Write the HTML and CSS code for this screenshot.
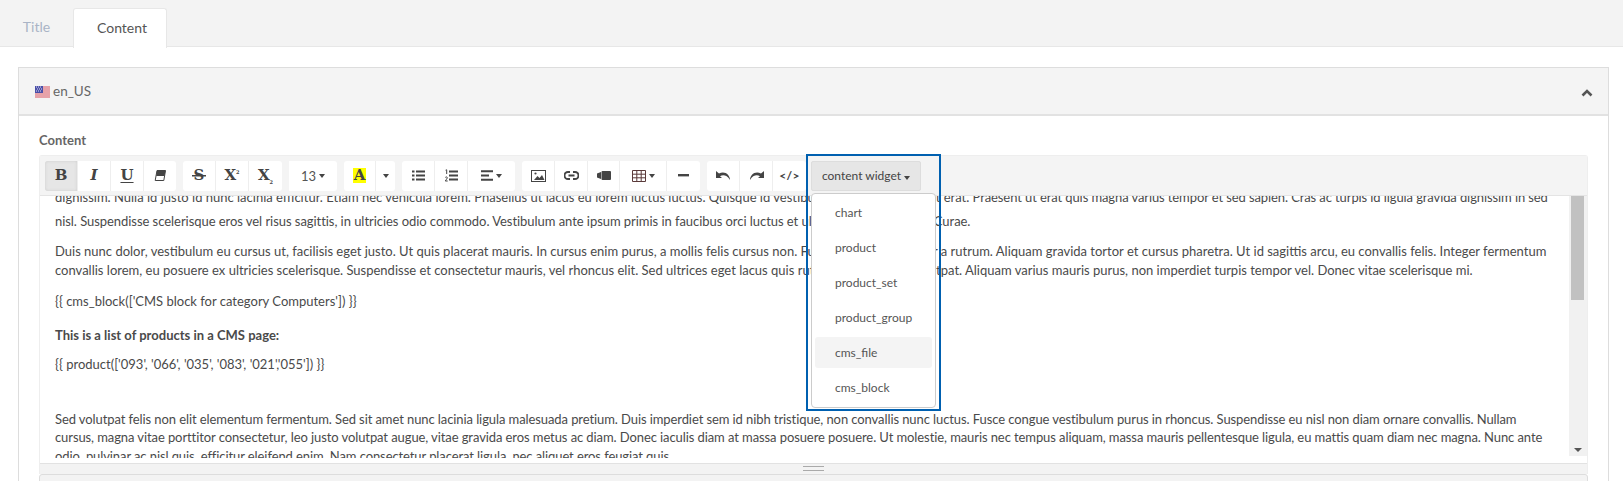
FILE: index.html
```html
<!DOCTYPE html>
<html>
<head>
    <meta charset="utf-8">
    <title>Content</title>
    <link rel="stylesheet" href="styles.css">
</head>
<body>
<ul class="tabs">
    <li class="tab">Title</li>
    <li class="tab tab-active">Content</li>
</ul>

<div class="panel">
    <div class="panel-heading">
        <span class="locale">
            <svg class="flag" width="15" height="12" viewBox="0 0 15 12">
                <rect width="15" height="12" fill="#f4f4f8"/>
                <path d="M0 1h15M0 3h15M0 5h15M0 7h15M0 9h15M0 11h15" stroke="#d8505a" stroke-width="1"/>
                <rect width="8" height="7" fill="#4a4fa8"/>
                <path d="M1 1h1M3 1h1M5 1h1M2 3h1M4 3h1M6 3h1M1 5h1M3 5h1M5 5h1" stroke="#dfe0f2" stroke-width="1"/>
            </svg>
            en_US
        </span>
        <svg class="chevron" width="12" height="8" viewBox="0 0 12 8">
            <path d="M1.5 6.5 6 2l4.500 4.500" fill="none" stroke="#555" stroke-width="2.600"/>
        </svg>
    </div>

    <div class="panel-body">
        <label class="field-label">Content</label>

        <div class="editor">
            <div class="toolbar">
                <div class="btn-group">
                    <button class="btn btn-active"><span class="glyph">B</span></button>
                    <button class="btn"><span class="glyph glyph-italic">I</span></button>
                    <button class="btn"><span class="glyph glyph-under">U</span></button>
                    <button class="btn btn-eraser">
                        <svg width="12" height="11" viewBox="0 0 12 11">
                            <path d="M3 .5H11.500L9.800 10.500H1.200Z" fill="#fff" stroke="#444"/>
                            <path d="M3 .5H11.500L10.600 6H2.200Z" fill="#444"/>
                        </svg>
                    </button>
                </div>
                <div class="btn-group">
                    <button class="btn"><span class="glyph glyph-strike">S</span></button>
                    <button class="btn"><span class="glyph">X<sup class="glyph-mark">2</sup></span></button>
                    <button class="btn"><span class="glyph">X<sub class="glyph-mark">2</sub></span></button>
                </div>
                <div class="btn-group">
                    <button class="btn btn-size">13 <i class="caret"></i></button>
                </div>
                <div class="btn-group">
                    <button class="btn btn-color"><span class="glyph glyph-hilite">A</span></button>
                    <button class="btn btn-narrow"><i class="caret"></i></button>
                </div>
                <div class="btn-group">
                    <button class="btn">
                        <svg width="13" height="11" viewBox="0 0 13 11">
                            <path d="M0 1.500h2.500M4 1.500h9M0 5.500h2.500M4 5.500h9M0 9.500h2.500M4 9.500h9" stroke="#444" stroke-width="2.200"/>
                        </svg>
                    </button>
                    <button class="btn">
                        <svg width="13" height="13" viewBox="0 0 13 13">
                            <path d="M4 2.500h9M4 6.500h9M4 10.500h9" stroke="#444" stroke-width="2.200"/>
                            <path d="M.6 1.200 1.700.8V5M.3 8.500C1 7.500 2.500 7.800 2.300 9 2.100 10 .8 10.800.3 12H2.700" fill="none" stroke="#444"/>
                        </svg>
                    </button>
                    <button class="btn btn-wide">
                        <svg width="12" height="11" viewBox="0 0 12 11">
                            <path d="M0 1.200h12M0 5.500h8M0 9.800h12" stroke="#444" stroke-width="1.900"/>
                        </svg>
                        <i class="caret"></i>
                    </button>
                </div>
                <div class="btn-group">
                    <button class="btn">
                        <svg width="15" height="12" viewBox="0 0 15 12">
                            <rect x=".5" y=".5" width="14" height="11" fill="none" stroke="#444"/>
                            <path d="M3 10 6.500 6l2 2 2.500-3 2.500 5Z" fill="#444"/>
                            <circle cx="4.500" cy="3.500" r="1.100" fill="#444"/>
                        </svg>
                    </button>
                    <button class="btn">
                        <svg width="15" height="9" viewBox="0 0 15 9">
                            <path d="M6 1H4a3.300 3.300 0 0 0 0 7H6M9 1h2a3.300 3.300 0 0 1 0 7H9M4.500 4.500h6" fill="none" stroke="#444" stroke-width="1.900"/>
                        </svg>
                    </button>
                    <button class="btn btn-video">
                        <svg width="14" height="9" viewBox="0 0 14 9">
                            <rect x="4.500" y="0" width="9.500" height="9" rx="1" fill="#444"/>
                            <path d="M0 2.500 4 1v7L0 6.500Z" fill="#444"/>
                        </svg>
                    </button>
                    <button class="btn btn-wide">
                        <svg width="14" height="12" viewBox="0 0 14 12">
                            <path d="M.5.500h13v11H.5ZM.5 4.200h13M.5 7.800h13M4.800.5v11M9.200.5v11" fill="none" stroke="#5a3a3a"/>
                        </svg>
                        <i class="caret"></i>
                    </button>
                    <button class="btn">
                        <svg width="11" height="3" viewBox="0 0 11 3"><rect width="11" height="2.400" fill="#444"/></svg>
                    </button>
                </div>
                <div class="btn-group">
                    <button class="btn">
                        <svg width="15" height="9" viewBox="0 0 15 9">
                            <path d="M0 0v7h6L4 5.200C7 3.500 11 4 14 9 14 4 9-.5 3 2.500Z" fill="#444"/>
                        </svg>
                    </button>
                    <button class="btn">
                        <svg width="15" height="9" viewBox="0 0 15 9">
                            <path d="M15 0v7H9l2-1.800C8 3.500 4 4 1 9 1 4 6-.5 12 2.500Z" fill="#444"/>
                        </svg>
                    </button>
                    <button class="btn"><span class="code-glyph">&lt;/&gt;</span></button>
                </div>
                <div class="widget">
                    <button class="btn-widget">content widget <i class="caret"></i></button>
                    <ul class="widget-menu">
                        <li class="widget-item">chart</li>
                        <li class="widget-item">product</li>
                        <li class="widget-item">product_set</li>
                        <li class="widget-item">product_group</li>
                        <li class="widget-item widget-item-hover">cms_file</li>
                        <li class="widget-item">cms_block</li>
                    </ul>
                    <div class="highlight-box"></div>
                </div>
            </div>

            <div class="editor-body">
                <div class="editable">
                    <div class="editable-inner">
                        <p class="para-lead">dignissim. Nulla id justo id nunc lacinia efficitur. Etiam nec vehicula lorem. Phasellus ut lacus eu lorem luctus luctus. Quisque id vestibulum lectus, at volutpat erat. <span class="tight">Praesent ut erat quis magna varius tempor et sed sapien. Cras ac turpis id ligula gravida dignissim in sed</span><br><span class="snug">nisl. Suspendisse scelerisque eros vel risus sagittis, in ultricies odio commodo. Vestibulum ante ipsum primis in faucibus orci luctus et ultrices posuere cubilia Curae.</span></p>
                        <p class="para-duis">Duis nunc dolor, vestibulum eu cursus ut, facilisis eget justo. Ut quis placerat mauris. In cursus enim purus, a mollis felis cursus non. Fusce at dui nec semper a rutrum. Aliquam gravida tortor et cursus pharetra. Ut id sagittis arcu, eu convallis felis. Integer fermentum<br>convallis lorem, eu posuere ex ultricies scelerisque. Suspendisse et consectetur mauris, vel rhoncus elit. Sed ultrices eget lacus quis rutrum. Nulla lorem volutpat. Aliquam varius mauris purus, non imperdiet turpis tempor vel. Donec vitae scelerisque mi.</p>
                        <p class="para-block">{{ cms_block(['CMS block for category Computers']) }}</p>
                        <p class="para-strong"><strong>This is a list of products in a CMS page:</strong></p>
                        <p class="para-product">{{ product(['093', '066', '035', '083', '021','055']) }}</p>
                        <p class="para-last">Sed volutpat felis non elit elementum fermentum. Sed sit amet nunc lacinia ligula malesuada pretium. Duis imperdiet sem id nibh tristique, non convallis nunc luctus. Fusce congue vestibulum purus in rhoncus. Suspendisse eu nisl non diam ornare convallis. Nullam<br>cursus, magna vitae porttitor consectetur, leo justo volutpat augue, vitae gravida eros metus ac diam. Donec iaculis diam at massa posuere posuere. Ut molestie, mauris nec tempus aliquam, massa mauris pellentesque ligula, eu mattis quam diam nec magna. Nunc ante<br>odio, pulvinar ac nisl quis, efficitur eleifend enim. Nam consectetur placerat ligula, nec aliquet eros feugiat quis.</p>
                    </div>
                </div>
                <div class="scrollbar">
                    <div class="scrollbar-thumb"></div>
                    <i class="scrollbar-arrow"></i>
                </div>
            </div>

            <div class="statusbar"><span class="grip"></span></div>
        </div>

        <div class="next-panel"></div>
    </div>
</div>
</body>
</html>
```

FILE: styles.css
```css
html, body {
    height: 481px;
    overflow: hidden;
}

body {
    margin: 0;
    background: #fff;
    color: #555;
    font-family: "Lato", "Open Sans", sans-serif;
    font-size: 13px;
    line-height: 1.42857;
}

/* Tabs */
.tabs {
    display: flex;
    height: 46px;
    margin: 0;
    padding: 0;
    list-style: none;
    background: #f3f3f3;
    border-bottom: 1px solid #e7e7e7;
}

.tab {
    width: 73px;
    margin-top: 8px;
    padding-top: 9px;
    font-size: 14px;
    color: #a9b4c6;
    text-align: center;
}

.tab-active {
    width: 88px;
    height: 30px;
    padding-left: 4px;
    background: #fff;
    color: #555;
    border: 1px solid #e7e7e7;
    border-bottom: 0;
    border-radius: 3px 3px 0 0;
}

/* Panel */
.panel {
    margin: 20px 14px 0 18px;
    border: 1px solid #ddd;
    border-bottom: 0;
}

.panel-heading {
    display: flex;
    align-items: center;
    justify-content: space-between;
    height: 46px;
    padding: 0 15px 0 16px;
    background: #f4f4f4;
    border-bottom: 2px solid #e2e2e2;
}

.locale {
    display: flex;
    align-items: center;
    gap: 3px;
    margin-top: 1px;
    font-size: 13.500px;
    color: #666;
}

.chevron {
    margin-top: 3px;
}

.panel-body {
    padding: 15px 20px 0;
}

.field-label {
    display: block;
    margin-bottom: 5px;
    font-weight: 700;
    color: #666;
}

/* Editor */
.editor {
    border: 1px solid #eee;
    border-bottom: 0;
    border-radius: 3px 3px 0 0;
}

.toolbar {
    display: flex;
    gap: 7px;
    height: 40px;
    padding: 5px 0 0 5px;
    box-sizing: border-box;
    background: #f4f4f4;
    border-bottom: 1px solid #e4e4e4;
}

.btn-group {
    display: flex;
    height: 30px;
}

.btn {
    display: flex;
    align-items: center;
    justify-content: center;
    gap: 3px;
    width: 33px;
    height: 30px;
    padding: 0;
    background: #fff;
    border: 0;
    border-right: 1px solid #eee;
    font-family: inherit;
    font-size: 13px;
    color: #444;
}

.btn:first-child {
    border-radius: 3px 0 0 3px;
}

.btn:last-child {
    border-right: 0;
    border-radius: 0 3px 3px 0;
}

.btn-active {
    background: #e6e6e6;
    box-shadow: inset 0 0 3px #ccc;
}

.btn-eraser {
    width: 32px;
}

.btn-video {
    width: 32px;
}

.btn-size {
    width: 48px;
    border-radius: 3px;
    color: #555;
}

.btn-color {
    width: 32px;
}

.btn-narrow {
    width: 19px;
}

.btn-wide {
    width: 47px;
}

.glyph {
    font-family: "DejaVu Serif", serif;
    font-size: 15px;
    font-weight: 700;
    color: #444;
    line-height: 1;
}

.glyph-italic {
    font-style: italic;
}

.glyph-under {
    text-decoration: underline;
    text-decoration-thickness: 1px;
    text-underline-offset: 2px;
}

.glyph-strike {
    padding: 0 2px;
    background: linear-gradient(#444, #444) center / 100% 1.500px no-repeat;
}

.glyph-mark {
    font-size: 5px;
    line-height: 0;
}

.glyph-hilite {
    padding: 0 1px;
    background: #ff0;
    font-size: 15px;
}

.code-glyph {
    font-family: "Lato", sans-serif;
    font-size: 12px;
    font-weight: 700;
    letter-spacing: .3px;
    color: #444;
}

.caret {
    display: inline-block;
    width: 0;
    height: 0;
    border-top: 4px solid #444;
    border-left: 3.500px solid transparent;
    border-right: 3.500px solid transparent;
}

/* Content widget dropdown */
.widget {
    position: relative;
    margin-left: -2px;
}

.btn-widget {
    width: 110px;
    height: 30px;
    padding: 0;
    background: #e6e6e6;
    border: 1px solid #ddd;
    border-radius: 2px;
    font-family: inherit;
    font-size: 12px;
    color: #444;
}

.widget-menu {
    position: absolute;
    z-index: 2;
    top: 32px;
    left: 0;
    width: 125px;
    height: 215px;
    box-sizing: border-box;
    margin: 0;
    padding: 3px;
    list-style: none;
    background: #fff;
    border: 1px solid #ccc;
    border-radius: 4px;
}

.widget-item {
    height: 31px;
    margin-bottom: 4px;
    padding-left: 20px;
    border-radius: 3px;
    font-size: 12px;
    line-height: 31px;
    color: #555;
}

.widget-item-hover {
    background: #f4f4f4;
}

.highlight-box {
    position: absolute;
    z-index: 3;
    top: -7px;
    left: -5px;
    width: 135px;
    height: 257px;
    box-sizing: border-box;
    border: 2px solid #0060b0;
}

/* Editor text area */
.editor-body {
    display: flex;
    height: 267px;
    background: #fff;
}

.editable {
    flex: 1;
    height: 262px;
    overflow: hidden;
    padding: 0 10px 0 15px;
    color: #4a4a4a;
    white-space: nowrap;
}

.editable-inner {
    margin-top: -11px;
}

.editable-inner p {
    margin: 0;
}

.editable-inner .para-lead {
    line-height: 24px;
}

.editable-inner .para-duis {
    margin-top: 9.400px;
}

.editable-inner .para-block {
    margin-top: 13.400px;
}

.editable-inner .para-strong {
    margin-top: 15.400px;
}

.editable-inner .para-product {
    margin-top: 10.100px;
}

.editable-inner .para-last {
    margin-top: 36.100px;
    letter-spacing: -.09px;
}

.tight {
    letter-spacing: -.1px;
}

.snug {
    letter-spacing: -.05px;
}

.scrollbar {
    position: relative;
    width: 18px;
    height: 260px;
    background: #f1f1f1;
}

.scrollbar-thumb {
    width: 13px;
    height: 104px;
    margin-left: 2px;
    background: #c1c1c1;
}

.scrollbar-arrow {
    position: absolute;
    right: 5px;
    bottom: 4px;
    border-top: 4px solid #555;
    border-left: 4px solid transparent;
    border-right: 4px solid transparent;
}

.statusbar {
    display: flex;
    align-items: center;
    justify-content: center;
    height: 10px;
    background: #f3f3f3;
    border-top: 1px solid #e2e2e2;
}

.grip {
    width: 21px;
    height: 3px;
    border-top: 1px solid #aaa;
    border-bottom: 1px solid #aaa;
}

.next-panel {
    height: 20px;
    background: #f3f3f3;
    border: 1px solid #ddd;
    border-radius: 3px;
}
```
